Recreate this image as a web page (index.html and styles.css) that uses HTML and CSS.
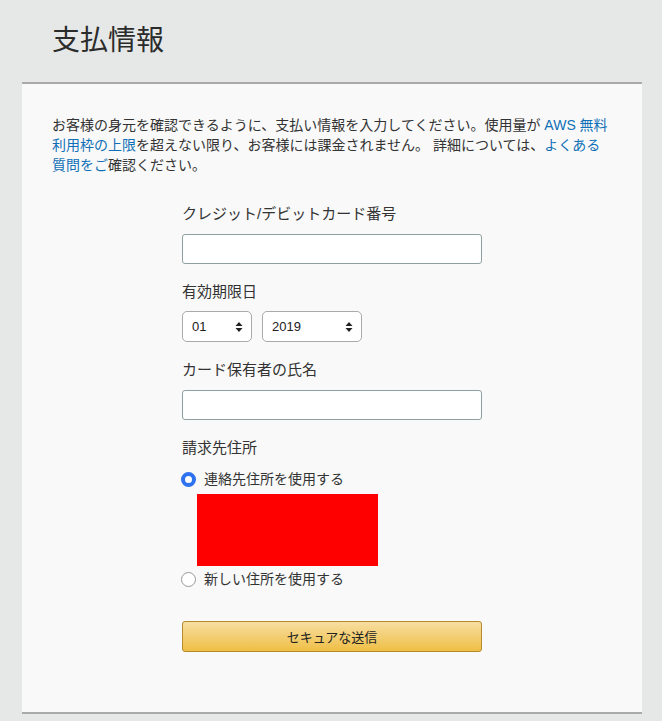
FILE: index.html
```html
<!DOCTYPE html>
<html lang="ja">
<head>
<meta charset="utf-8">
<title>支払情報</title>
<link rel="stylesheet" href="styles.css">
</head>
<body>
<header class="page-header">
  <h1 class="page-title">支払情報</h1>
</header>
<main class="card">
  <p class="intro">お客様の身元を確認できるように、支払い情報を入力してください。使用量が <a href="#" class="link">AWS 無料利用枠の上限</a>を超えない限り、お客様には課金されません。 詳細については、<a href="#" class="link">よくある質問をご</a>確認ください。</p>
  <form class="form">
    <label class="label">クレジット/デビットカード番号</label>
    <input class="text-input" type="text">

    <label class="label">有効期限日</label>
    <div class="select-row">
      <span class="select-wrap month">
        <select class="select"><option>01</option></select>
        <svg class="select-arrow" width="8" height="12" viewBox="0 0 8 12"><path d="M4 1 L7.5 5 L0.5 5 Z M4 11 L7.5 7 L0.5 7 Z" fill="#222"/></svg>
      </span>
      <span class="select-wrap year">
        <select class="select"><option>2019</option></select>
        <svg class="select-arrow" width="8" height="12" viewBox="0 0 8 12"><path d="M4 1 L7.5 5 L0.5 5 Z M4 11 L7.5 7 L0.5 7 Z" fill="#222"/></svg>
      </span>
    </div>

    <label class="label">カード保有者の氏名</label>
    <input class="text-input" type="text">

    <label class="label">請求先住所</label>
    <div class="radio-group">
      <label class="radio-row"><input class="radio" type="radio" name="addr" checked><span>連絡先住所を使用する</span></label>
      <div class="address-box"></div>
      <label class="radio-row"><input class="radio" type="radio" name="addr"><span>新しい住所を使用する</span></label>
    </div>

    <button class="submit" type="button">セキュアな送信</button>
  </form>
</main>
</body>
</html>
```
FILE: styles.css
```css
* { box-sizing: border-box; }
html, body {
  margin: 0;
  padding: 0;
  background: #e5e8e7;
  font-family: "Liberation Sans", "Noto Sans CJK JP", sans-serif;
  color: #333;
}
.page-header {
  height: 82px;
  padding: 0 0 0 52px;
  display: flex;
  align-items: center;
}
.page-title {
  margin: 0;
  font-size: 28px;
  font-weight: normal;
  color: #2b2b2b;
  line-height: 1;
  position: relative;
  top: 0;
}
.card {
  margin: 0 20px 0 22px;
  width: 620px;
  background: #f9f9f9;
  border-top: 2px solid #aaaaaa;
  border-bottom: 2px solid #aaaaaa;
  padding: 31px 30px 60px 30px;
}
.intro {
  margin: 0;
  font-size: 14px;
  line-height: 20px;
  color: #333;
}
.link {
  color: #0f70b7;
  text-decoration: none;
}
.form {
  width: 300px;
  margin: 29px auto 0 auto;
  display: flex;
  flex-direction: column;
}
.label {
  font-size: 15px;
  line-height: 20px;
  color: #333;
  margin-bottom: 10px;
}
.text-input {
  height: 30px;
  width: 300px;
  border: 1px solid #8fa0a0;
  border-radius: 3px;
  background: #fff;
  margin: 0 0 18px 0;
  padding: 0 8px;
  font-size: 14px;
}
.select-row {
  display: flex;
  gap: 10px;
  margin: -1px 0 18px 0;
}
.select-wrap {
  position: relative;
  display: block;
}
.select-wrap.month { width: 70px; }
.select-wrap.year { width: 100px; }
.select {
  appearance: none;
  -webkit-appearance: none;
  width: 100%;
  height: 31px;
  border: 1px solid #aaa;
  border-radius: 5px;
  background: #fff;
  font-family: "Liberation Sans", sans-serif;
  font-size: 13px;
  color: #222;
  padding: 0 0 0 9px;
  margin: 0;
}
.select-arrow {
  position: absolute;
  right: 9px;
  top: 10px;
  pointer-events: none;
}
.radio-group {
  display: flex;
  flex-direction: column;
  margin-top: 1px;
}
.radio-row {
  display: flex;
  align-items: center;
  font-size: 14px;
  line-height: 20px;
  color: #333;
}
.radio {
  appearance: none;
  -webkit-appearance: none;
  width: 15px;
  height: 15px;
  margin: 0 8px 0 -1px;
  border: 1px solid #999;
  border-radius: 50%;
  background: #fff;
}
.radio:checked {
  border: 4.5px solid #2f72ef;
  background: #fff;
}
.address-box {
  width: 181px;
  height: 72px;
  margin: 5px 0 3px 15px;
  background: #ff0000;
}
.submit {
  margin-top: 32px;
  height: 31px;
  width: 300px;
  border: 1px solid #b48a2c;
  border-radius: 3px;
  background: linear-gradient(to bottom, #f7dea1, #efbf45);
  font-family: "Liberation Sans", "Noto Sans CJK JP", sans-serif;
  font-size: 13px;
  color: #222;
  padding: 0;
}
```
